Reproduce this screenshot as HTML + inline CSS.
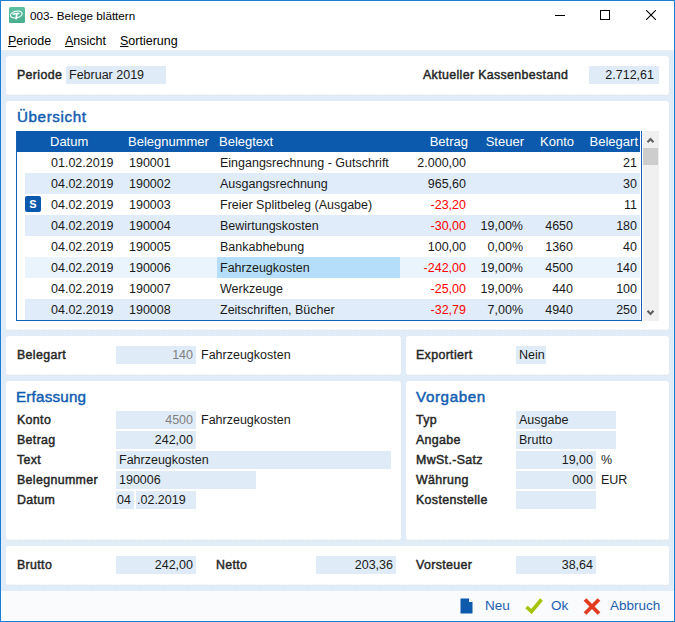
<!DOCTYPE html>
<html><head><meta charset="utf-8">
<style>
*{margin:0;padding:0;box-sizing:border-box}
html,body{width:675px;height:622px;overflow:hidden;background:#fff}
body{position:relative;font-family:"Liberation Sans",sans-serif;font-size:12.5px;color:#1a1a1a}
.a{position:absolute;white-space:nowrap}
.win{position:absolute;left:0;top:0;width:675px;height:622px;border:1px solid #1a7fd4;background:#fff}
.client{position:absolute;left:1px;top:51px;width:673px;height:540px;background:#e0ecf8}
.sep{position:absolute;left:1px;top:50px;width:673px;height:1px;background:#ededed}
.btnbar{position:absolute;left:1px;top:591px;width:673px;height:30px;background:#f9fbfd}
.panel{position:absolute;background:#fff;border-radius:3px;box-shadow:0 1px 0 #e2e8ef}
.panel::after{content:"";position:absolute;left:3px;right:3px;bottom:0;height:1px;background:repeating-linear-gradient(90deg,#e6eef6 0 1px,#fbfcfd 1px 3px)}
.fld{position:absolute;background:#dfecf8;height:18px;line-height:18px;padding:0 3px;white-space:nowrap}
.r{text-align:right}
.lbl{position:absolute;font-weight:normal;font-size:12.4px;letter-spacing:0.35px;-webkit-text-stroke:0.45px #262626;line-height:18px;color:#262626;white-space:nowrap}
.hd{position:absolute;font-weight:normal;font-size:15.2px;letter-spacing:0.6px;-webkit-text-stroke:0.45px #115db2;color:#115db2;line-height:20px;white-space:nowrap}
.gray{color:#808080}
.tbl{position:absolute;left:16px;top:131px;width:626px;height:190px;border:1px solid #1560b0;border-top:none;background:#fff;overflow:hidden}
.th{position:absolute;left:0;top:0;width:623px;height:21px;background:#0b5aad;color:#fff;font-size:13px}
.row{position:absolute;left:8px;width:615px;height:21px}
.c{position:absolute;line-height:21px;white-space:nowrap;top:0}
.neg{color:#f00}
</style></head><body>
<div class="win"></div>
<!-- title bar -->
<svg class="a" style="left:9px;top:7px" width="16" height="16" viewBox="0 0 16 16">
 <defs><linearGradient id="ig" x1="0" y1="0" x2="0" y2="1"><stop offset="0" stop-color="#5cbfa0"/><stop offset="1" stop-color="#48ad8e"/></linearGradient></defs>
 <rect x="0" y="0" width="16" height="16" rx="1.5" fill="url(#ig)"/>
 <ellipse cx="7.3" cy="7.5" rx="5.9" ry="3.3" fill="none" stroke="#fff" stroke-width="1.15" transform="rotate(-13 7.3 7.5)"/>
 <path d="M3.6 7.2 Q6.5 6.2 10.4 6.6" stroke="#fff" stroke-width="1.5" fill="none"/>
 <path d="M7.8 6.6 L7.1 12.3" stroke="#fff" stroke-width="1.7" fill="none"/>
</svg>
<div class="a" style="left:30px;top:7px;line-height:18px;font-size:11.7px;color:#000">003- Belege blättern</div>
<div class="a" style="left:555px;top:15px;width:10px;height:1px;background:#000"></div>
<div class="a" style="left:600px;top:10px;width:10px;height:10px;border:1px solid #000"></div>
<svg class="a" style="left:646px;top:10px" width="10" height="10" viewBox="0 0 10 10"><path d="M0 0 L10 10 M10 0 L0 10" stroke="#000" stroke-width="1.1"/></svg>
<!-- menu -->
<div class="a" style="left:8px;top:32px;line-height:18px;color:#000"><u>P</u>eriode</div>
<div class="a" style="left:65px;top:32px;line-height:18px;color:#000"><u>A</u>nsicht</div>
<div class="a" style="left:120px;top:32px;line-height:18px;color:#000"><u>S</u>ortierung</div>
<div class="sep"></div>
<div class="client"></div>
<div class="btnbar"></div>

<!-- Periode panel -->
<div class="panel" style="left:6px;top:56px;width:663px;height:39px"></div>
<div class="lbl" style="left:17px;top:66px">Periode</div>
<div class="fld" style="left:66px;top:66px;width:100px">Februar 2019</div>
<div class="lbl" style="left:423px;top:66px">Aktueller Kassenbestand</div>
<div class="fld r" style="left:589px;top:66px;width:70px;padding-right:5px">2.712,61</div>

<!-- Übersicht panel -->
<div class="panel" style="left:6px;top:101px;width:663px;height:229px"></div>
<div class="hd" style="left:17px;top:107px">Übersicht</div>
<div class="tbl">
 <div class="th">
  <div class="c" style="left:33px">Datum</div>
  <div class="c" style="left:111px">Belegnummer</div>
  <div class="c" style="left:202px">Belegtext</div>
  <div class="c r" style="right:172px">Betrag</div>
  <div class="c r" style="right:116px">Steuer</div>
  <div class="c r" style="right:66px">Konto</div>
  <div class="c r" style="right:2px">Belegart</div>
 </div>
</div>
<div id="rows"><div class="c" style="left:51px;top:153px">01.02.2019</div>
<div class="c" style="left:129px;top:153px">190001</div>
<div class="c" style="left:220px;top:153px">Eingangsrechnung - Gutschrift</div>
<div class="c r " style="left:386px;top:153px;width:80px">2.000,00</div>
<div class="c r " style="left:557px;top:153px;width:80px">21</div>
<div class="a" style="left:25px;top:173px;width:615px;height:21px;background:#e0ecf9"></div>
<div class="c" style="left:51px;top:174px">04.02.2019</div>
<div class="c" style="left:129px;top:174px">190002</div>
<div class="c" style="left:220px;top:174px">Ausgangsrechnung</div>
<div class="c r " style="left:386px;top:174px;width:80px">965,60</div>
<div class="c r " style="left:557px;top:174px;width:80px">30</div>
<div class="a" style="left:25px;top:196px;width:16px;height:16px;background:#0b5aad;border-radius:2px;color:#fff;font-weight:bold;font-size:11px;line-height:16px;text-align:center">S</div>
<div class="c" style="left:51px;top:195px">04.02.2019</div>
<div class="c" style="left:129px;top:195px">190003</div>
<div class="c" style="left:220px;top:195px">Freier Splitbeleg (Ausgabe)</div>
<div class="c r neg" style="left:386px;top:195px;width:80px">-23,20</div>
<div class="c r " style="left:557px;top:195px;width:80px">11</div>
<div class="a" style="left:25px;top:215px;width:615px;height:21px;background:#e0ecf9"></div>
<div class="c" style="left:51px;top:216px">04.02.2019</div>
<div class="c" style="left:129px;top:216px">190004</div>
<div class="c" style="left:220px;top:216px">Bewirtungskosten</div>
<div class="c r neg" style="left:386px;top:216px;width:80px">-30,00</div>
<div class="c r " style="left:443px;top:216px;width:80px">19,00%</div>
<div class="c r " style="left:493px;top:216px;width:80px">4650</div>
<div class="c r " style="left:557px;top:216px;width:80px">180</div>
<div class="c" style="left:51px;top:237px">04.02.2019</div>
<div class="c" style="left:129px;top:237px">190005</div>
<div class="c" style="left:220px;top:237px">Bankabhebung</div>
<div class="c r " style="left:386px;top:237px;width:80px">100,00</div>
<div class="c r " style="left:443px;top:237px;width:80px">0,00%</div>
<div class="c r " style="left:493px;top:237px;width:80px">1360</div>
<div class="c r " style="left:557px;top:237px;width:80px">40</div>
<div class="a" style="left:25px;top:257px;width:615px;height:21px;background:#eaf4fd"></div>
<div class="a" style="left:217px;top:257px;width:183px;height:21px;background:#b5defa"></div>
<div class="c" style="left:51px;top:258px">04.02.2019</div>
<div class="c" style="left:129px;top:258px">190006</div>
<div class="c" style="left:220px;top:258px">Fahrzeugkosten</div>
<div class="c r neg" style="left:386px;top:258px;width:80px">-242,00</div>
<div class="c r " style="left:443px;top:258px;width:80px">19,00%</div>
<div class="c r " style="left:493px;top:258px;width:80px">4500</div>
<div class="c r " style="left:557px;top:258px;width:80px">140</div>
<div class="c" style="left:51px;top:279px">04.02.2019</div>
<div class="c" style="left:129px;top:279px">190007</div>
<div class="c" style="left:220px;top:279px">Werkzeuge</div>
<div class="c r neg" style="left:386px;top:279px;width:80px">-25,00</div>
<div class="c r " style="left:443px;top:279px;width:80px">19,00%</div>
<div class="c r " style="left:493px;top:279px;width:80px">440</div>
<div class="c r " style="left:557px;top:279px;width:80px">100</div>
<div class="a" style="left:25px;top:299px;width:615px;height:21px;background:#e0ecf9"></div>
<div class="c" style="left:51px;top:300px">04.02.2019</div>
<div class="c" style="left:129px;top:300px">190008</div>
<div class="c" style="left:220px;top:300px">Zeitschriften, Bücher</div>
<div class="c r neg" style="left:386px;top:300px;width:80px">-32,79</div>
<div class="c r " style="left:443px;top:300px;width:80px">7,00%</div>
<div class="c r " style="left:493px;top:300px;width:80px">4940</div>
<div class="c r " style="left:557px;top:300px;width:80px">250</div></div><!--rowsend-->

<!-- scrollbar -->
<div class="a" style="left:643px;top:131px;width:16px;height:190px;background:#f0f0f0"></div>
<div class="a" style="left:643px;top:148px;width:15px;height:17px;background:#cdcdcd"></div>
<svg class="a" style="left:646px;top:136px" width="9" height="8" viewBox="0 0 9 8"><path d="M1.5 6.2 L4.5 3 L7.5 6.2" stroke="#606060" stroke-width="2.1" fill="none"/></svg>
<svg class="a" style="left:646px;top:309px" width="9" height="8" viewBox="0 0 9 8"><path d="M1.5 1.8 L4.5 5 L7.5 1.8" stroke="#606060" stroke-width="2.1" fill="none"/></svg>

<!-- Belegart / Exportiert -->
<div class="panel" style="left:6px;top:336px;width:395px;height:39px"></div>
<div class="panel" style="left:406px;top:336px;width:263px;height:39px"></div>
<div class="lbl" style="left:17px;top:346px">Belegart</div>
<div class="fld r gray" style="left:116px;top:346px;width:80px">140</div>
<div class="a" style="left:201px;top:346px;line-height:18px">Fahrzeugkosten</div>
<div class="lbl" style="left:416px;top:346px">Exportiert</div>
<div class="fld" style="left:516px;top:346px;width:30px">Nein</div>

<!-- Erfassung -->
<div class="panel" style="left:6px;top:381px;width:395px;height:159px"></div>
<div class="hd" style="left:16px;top:387px;letter-spacing:0.2px">Erfassung</div>
<div class="lbl" style="left:17px;top:411px">Konto</div>
<div class="lbl" style="left:17px;top:431px">Betrag</div>
<div class="lbl" style="left:17px;top:451px">Text</div>
<div class="lbl" style="left:17px;top:471px">Belegnummer</div>
<div class="lbl" style="left:17px;top:491px">Datum</div>
<div class="fld r gray" style="left:116px;top:411px;width:80px">4500</div>
<div class="a" style="left:201px;top:411px;line-height:18px">Fahrzeugkosten</div>
<div class="fld r" style="left:116px;top:431px;width:80px">242,00</div>
<div class="fld" style="left:116px;top:451px;width:275px">Fahrzeugkosten</div>
<div class="fld" style="left:116px;top:471px;width:140px">190006</div>
<div class="fld" style="left:116px;top:491px;width:18px;padding:0 0 0 1px">04</div>
<div class="fld" style="left:136px;top:491px;width:60px;padding:0 0 0 1px">.02.2019</div>

<!-- Vorgaben -->
<div class="panel" style="left:406px;top:381px;width:263px;height:159px"></div>
<div class="hd" style="left:416px;top:387px">Vorgaben</div>
<div class="lbl" style="left:416px;top:411px">Typ</div>
<div class="lbl" style="left:416px;top:431px">Angabe</div>
<div class="lbl" style="left:416px;top:451px">MwSt.-Satz</div>
<div class="lbl" style="left:416px;top:471px">Währung</div>
<div class="lbl" style="left:416px;top:491px">Kostenstelle</div>
<div class="fld" style="left:516px;top:411px;width:100px">Ausgabe</div>
<div class="fld" style="left:516px;top:431px;width:100px">Brutto</div>
<div class="fld r" style="left:516px;top:451px;width:80px">19,00</div>
<div class="a" style="left:601px;top:451px;line-height:18px">%</div>
<div class="fld r" style="left:516px;top:471px;width:80px">000</div>
<div class="a" style="left:601px;top:471px;line-height:18px">EUR</div>
<div class="fld" style="left:516px;top:491px;width:80px"></div>

<!-- Bottom -->
<div class="panel" style="left:6px;top:546px;width:663px;height:39px"></div>
<div class="lbl" style="left:17px;top:556px">Brutto</div>
<div class="fld r" style="left:116px;top:556px;width:80px">242,00</div>
<div class="lbl" style="left:216px;top:556px">Netto</div>
<div class="fld r" style="left:316px;top:556px;width:80px">203,36</div>
<div class="lbl" style="left:416px;top:556px">Vorsteuer</div>
<div class="fld r" style="left:516px;top:556px;width:80px">38,64</div>

<!-- buttons -->
<svg class="a" style="left:460px;top:598px" width="13" height="16" viewBox="0 0 13 16"><path d="M0.5 0.5 H9 L12.5 4 V15 Q12.5 15.5 12 15.5 H1 Q0.5 15.5 0.5 15 Z" fill="#0d5aad"/><path d="M9 0.5 V4 H12.5" fill="#fff"/></svg>
<div class="a" style="left:485px;top:597px;line-height:18px;font-size:13.5px;color:#1c5fb0">Neu</div>
<svg class="a" style="left:525px;top:598px" width="18" height="16" viewBox="0 0 18 16"><path d="M1.5 9 L6.5 13.5 L16.5 1.5" stroke="#a6c300" stroke-width="3.6" fill="none"/></svg>
<div class="a" style="left:551px;top:597px;line-height:18px;font-size:13.5px;color:#1c5fb0">Ok</div>
<svg class="a" style="left:583px;top:598px" width="18" height="17" viewBox="0 0 18 17"><path d="M2 1.5 L16 15.5 M16 1.5 L2 15.5" stroke="#e13a1f" stroke-width="3.8" fill="none"/></svg>
<div class="a" style="left:610px;top:597px;line-height:18px;font-size:13.5px;color:#1c5fb0">Abbruch</div>
</body></html>
